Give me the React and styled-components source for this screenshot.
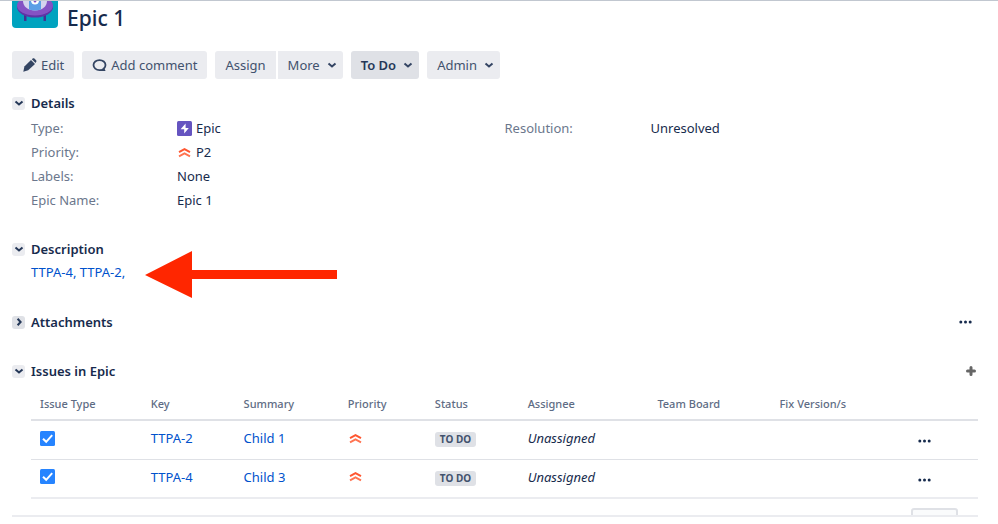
import React, { useState } from 'react';
import styled, { createGlobalStyle } from 'styled-components';

const GlobalStyle = createGlobalStyle`
  * {
    box-sizing: border-box;
  }

  body {
    margin: 0;
    background: #ffffff;
    color: #172b4d;
    font-family: 'Noto Sans', 'Open Sans', sans-serif;
    font-size: 13px;
    line-height: 20px;
  }
`;

const Page = styled.main`
  border-top: 1px solid #c1c7d0;
  padding: 0 20px 0 12px;
`;

const Header = styled.header`
  display: flex;
  gap: 9px;
  height: 34px;
  margin-bottom: 16px;
`;

const Avatar = styled.svg`
  display: block;
  width: 46px;
  height: 27px;
`;

const Title = styled.h1`
  margin: 0;
  font-size: 21px;
  font-weight: 500;
  line-height: 34px;
`;

const Toolbar = styled.div`
  display: flex;
  gap: 8px;
  margin-bottom: 12px;
`;

const ButtonGroup = styled.div`
  display: flex;
  gap: 2px;
`;

const ToolButton = styled.button`
  display: inline-flex;
  align-items: center;
  gap: ${(props) => (props.$menu ? '7px' : '4px')};
  height: 28px;
  padding: 0 ${(props) => (props.$menu ? '6px' : '10px')} 0 10px;
  border: none;
  border-radius: ${(props) => props.$radius || '3px'};
  background: ${(props) => (props.$status ? '#dfe1e6' : '#ebecf0')};
  color: ${(props) => (props.$status ? '#253858' : '#42526e')};
  font-family: inherit;
  font-size: 13px;
  font-weight: ${(props) => (props.$status ? 600 : 400)};
  white-space: nowrap;
  cursor: pointer;

  svg {
    flex: none;
    color: #344563;
  }
`;

const Module = styled.section`
  position: relative;
  margin-bottom: ${(props) => props.$space || '29px'};
`;

const ModuleHeader = styled.div`
  display: flex;
  align-items: center;
  justify-content: space-between;
  height: 24px;
`;

const ModuleTitle = styled.h2`
  display: flex;
  align-items: center;
  gap: 6px;
  margin: 0;
  font-size: 13px;
  font-weight: 600;
  line-height: 20px;
`;

const Toggle = styled.button`
  display: flex;
  align-items: center;
  justify-content: center;
  width: 13px;
  height: 13px;
  padding: 0;
  border: none;
  border-radius: 3px;
  background: ${(props) => (props.$open ? '#ebecf0' : '#dfe1e6')};
  color: #253858;
  cursor: pointer;
`;

const IconButton = styled.button`
  display: inline-flex;
  align-items: center;
  justify-content: center;
  padding: 0;
  border: none;
  background: transparent;
  color: ${(props) => props.$color || '#172b4d'};
  cursor: pointer;
`;

const HeaderAction = styled.div`
  display: flex;
  padding-right: ${(props) => props.$inset || '0'};
`;

const ModuleBody = styled.div`
  padding-left: 19px;
`;

const DetailsGrid = styled.div`
  display: grid;
  grid-template-columns: 1fr 1fr;
  align-items: start;
`;

const FieldList = styled.dl`
  display: grid;
  grid-template-columns: 146px 1fr;
  margin: 0;
  padding-top: 1px;
`;

const FieldLabel = styled.dt`
  color: #6b778c;
  line-height: 24px;
`;

const FieldValue = styled.dd`
  display: flex;
  align-items: center;
  gap: 4px;
  margin: 0;
  line-height: 24px;
`;

const IssueLink = styled.a`
  color: #0052cc;
  text-decoration: none;

  &:hover {
    text-decoration: underline;
  }
`;

const DescriptionText = styled.p`
  margin: 0;
  color: #0052cc;
  line-height: 22px;
`;

const Arrow = styled.svg`
  position: absolute;
  left: 133px;
  top: 14px;
  width: 192px;
  height: 48px;
  pointer-events: none;
`;

const IssuesTable = styled.table`
  width: 100%;
  table-layout: fixed;
  border-collapse: separate;
  border-spacing: 0;
  margin-top: 5px;
  text-align: left;
`;

const HeadCell = styled.th`
  width: ${(props) => props.$width};
  height: 33px;
  padding: 0 0 0 9px;
  border-bottom: 2px solid #dfe1e6;
  color: #5e6c84;
  font-size: 11px;
  font-weight: 500;
  line-height: 20px;
  white-space: nowrap;
`;

const Cell = styled.td`
  height: 39px;
  padding: 0 0 4px 9px;
  border-bottom: 1px solid #dfe1e6;
  white-space: nowrap;

  svg {
    display: block;
  }

  tr:last-child & {
    border-bottom: 2px solid #ebecf0;
  }
`;

const Lozenge = styled.span`
  display: inline-block;
  padding: 0 5px;
  border-radius: 3px;
  background: #dfe1e6;
  color: #42526e;
  font-size: 10px;
  font-weight: 700;
  line-height: 15px;
`;

const Assignee = styled.em`
  font-style: italic;
`;

// the comment bar is cut off by the bottom edge of the panel
const Footer = styled.footer`
  display: flex;
  justify-content: flex-end;
  height: 18px;
  padding: 9px 20px 0 0;
  margin-top: -29px;
  border-bottom: 2px solid #ebecf0;
  overflow: hidden;
`;

const FooterButton = styled.button`
  flex: none;
  width: 47px;
  height: 28px;
  border: 2px solid #dfe1e6;
  border-radius: 3px;
  background: #fafbfc;
`;

const ChevronDown = () => (
  <svg width="10" height="10" viewBox="0 0 10 10" fill="none" stroke="currentColor" strokeWidth="2">
    <path d="M1.5 3.4 5 6.4l3.5-3" />
  </svg>
);

const ChevronRight = () => (
  <svg width="10" height="10" viewBox="0 0 10 10" fill="none" stroke="currentColor" strokeWidth="2">
    <path d="M3.6 1.8 6.6 5l-3 3.2" />
  </svg>
);

const PencilIcon = () => (
  <svg width="15" height="14" viewBox="0 0 15 14" fill="currentColor">
    <path d="M9 2 13 6 6.200 12.300 1.300 13.700 2.400 8.600z" />
    <path d="M9.800 1.300 10.700.6c.5-.5 1.200-.5 1.700 0l1.700 1.700c.5.5.5 1.200 0 1.700l-.6.900z" />
  </svg>
);

const CommentIcon = () => (
  <svg width="15" height="14" viewBox="0 0 15 14" fill="none" stroke="currentColor" strokeWidth="1.8">
    <path d="M9.500 11.800C8.900 12 8.200 12.100 7.500 12.100 4.100 12.100 1.500 9.900 1.500 7.100S4.100 2.100 7.500 2.100s6 2.200 6 5c0 1.300-.6 2.500-1.500 3.400" />
    <path d="M9 11.400 12 9.400l1.600 3.600H9z" fill="currentColor" stroke="none" />
  </svg>
);

const EpicIcon = () => (
  <svg width="15" height="15" viewBox="0 0 15 15">
    <rect width="15" height="15" rx="1.500" fill="#6554c0" />
    <path d="M8.600 2.500 3.600 8.300h3.600v4.200l4.600-5.600H8.600z" fill="#ffffff" />
  </svg>
);

const PriorityIcon = ({ label }) => (
  <svg width="15" height="15" viewBox="0 0 15 15" fill="none" strokeWidth="1.900" role="img" aria-label={label}>
    <path d="M2 7.200 7.500 4.200 13 7.200" stroke="#ff5630" />
    <path d="M2 11.400 7.500 8.400 13 11.400" stroke="#ff7452" />
  </svg>
);

const TaskIcon = () => (
  <svg width="15" height="15" viewBox="0 0 15 15" role="img" aria-label="Task">
    <rect width="15" height="15" rx="1.500" fill="#2684ff" />
    <path d="M3 7.700 6.200 10.800 12.200 4.200" fill="none" stroke="#ffffff" strokeWidth="2" />
  </svg>
);

const DotsIcon = () => (
  <svg width="13" height="4" viewBox="0 0 13 4" fill="currentColor">
    <circle cx="1.800" cy="2" r="1.500" />
    <circle cx="6.500" cy="2" r="1.500" />
    <circle cx="11.200" cy="2" r="1.500" />
  </svg>
);

const PlusIcon = () => (
  <svg width="10" height="10" viewBox="0 0 10 10" stroke="currentColor" strokeWidth="3" strokeLinecap="round">
    <path d="M5 1.500v7M1.500 5h7" />
  </svg>
);

const ProjectAvatar = () => (
  <Avatar viewBox="0 0 46 27" role="img" aria-label="Project avatar">
    <path d="M0 0h46v23q0 4-4 4H4q-4 0-4-4z" fill="#00a3bf" />
    <path d="M12 13h2.500v7H12zM31.500 13H34v7h-2.500z" fill="#403294" />
    <ellipse cx="23" cy="6" rx="18" ry="10.500" fill="#5e35a5" />
    <ellipse cx="23" cy="4.500" rx="18" ry="10" fill="#8552c4" />
    <path d="M11 0h24c0 5.500-5 9.500-12 9.500S11 5.500 11 0z" fill="#d5d3ee" />
    <path d="M17 0h12v8.500q-6 1.800-12 0z" fill="#5c9fe6" />
    <path d="M19 0h8q-.5 3.500-4 3.500T19 0z" fill="#ffffff" />
    <path d="M21.500 0h3q-.3 1.500-1.500 1.500T21.500 0z" fill="#8552c4" />
  </Avatar>
);

const columns = [
  { name: 'Issue Type', width: '11.700%' },
  { name: 'Key', width: '9.800%' },
  { name: 'Summary', width: '11%' },
  { name: 'Priority', width: '9.200%' },
  { name: 'Status', width: '9.800%' },
  { name: 'Assignee', width: '13.700%' },
  { name: 'Team Board', width: '12.900%' },
  { name: 'Fix Version/s', width: '14.600%' },
  { name: '', width: 'auto' },
];

const issues = [
  { key: 'TTPA-2', summary: 'Child 1' },
  { key: 'TTPA-4', summary: 'Child 3' },
];

const Section = ({ title, defaultOpen = true, space, action, children }) => {
  const [open, setOpen] = useState(defaultOpen);

  return (
    <Module $space={space}>
      <ModuleHeader>
        <ModuleTitle>
          <Toggle
            type="button"
            $open={open}
            aria-label={`Toggle ${title}`}
            aria-expanded={open}
            onClick={() => setOpen(!open)}
          >
            {open ? <ChevronDown /> : <ChevronRight />}
          </Toggle>
          {title}
        </ModuleTitle>
        {action}
      </ModuleHeader>
      {open && children}
    </Module>
  );
};

const App = () => {
  return (
    <>
      <GlobalStyle />
      <Page>
        <Header>
          <ProjectAvatar />
          <Title>Epic 1</Title>
        </Header>

        <Toolbar>
          <ToolButton type="button">
            <PencilIcon />
            Edit
          </ToolButton>
          <ToolButton type="button">
            <CommentIcon />
            Add comment
          </ToolButton>
          <ButtonGroup>
            <ToolButton type="button" $radius="3px 0 0 3px">Assign</ToolButton>
            <ToolButton type="button" $menu $radius="0 3px 3px 0">
              More
              <ChevronDown />
            </ToolButton>
          </ButtonGroup>
          <ToolButton type="button" $menu $status>
            To Do
            <ChevronDown />
          </ToolButton>
          <ToolButton type="button" $menu>
            Admin
            <ChevronDown />
          </ToolButton>
        </Toolbar>

        <Section title="Details" space="25px">
          <ModuleBody>
            <DetailsGrid>
              <FieldList>
                <FieldLabel>Type:</FieldLabel>
                <FieldValue><EpicIcon />Epic</FieldValue>
                <FieldLabel>Priority:</FieldLabel>
                <FieldValue><PriorityIcon label="P2" />P2</FieldValue>
                <FieldLabel>Labels:</FieldLabel>
                <FieldValue>None</FieldValue>
                <FieldLabel>Epic Name:</FieldLabel>
                <FieldValue>Epic 1</FieldValue>
              </FieldList>
              <FieldList>
                <FieldLabel>Resolution:</FieldLabel>
                <FieldValue>Unresolved</FieldValue>
              </FieldList>
            </DetailsGrid>
          </ModuleBody>
        </Section>

        <Section title="Description" space="27px">
          <ModuleBody>
            <DescriptionText>
              <IssueLink href="#TTPA-4">TTPA-4</IssueLink>, <IssueLink href="#TTPA-2">TTPA-2</IssueLink>,
            </DescriptionText>
          </ModuleBody>
          <Arrow viewBox="0 0 192 48" aria-hidden="true">
            <path d="M0 24 47 0v19h145v9H47v19z" fill="#ff2600" />
          </Arrow>
        </Section>

        <Section
          title="Attachments"
          defaultOpen={false}
          space="25px"
          action={
            <HeaderAction $inset="6px">
              <IconButton type="button" aria-label="Attachment options"><DotsIcon /></IconButton>
            </HeaderAction>
          }
        />

        <Section
          title="Issues in Epic"
          action={
            <HeaderAction $inset="2px">
              <IconButton type="button" $color="#666666" aria-label="Create issue in epic"><PlusIcon /></IconButton>
            </HeaderAction>
          }
        >
          <ModuleBody>
            <IssuesTable>
              <thead>
                <tr>
                  {columns.map((column, index) => (
                    <HeadCell key={index} $width={column.width} scope="col">{column.name}</HeadCell>
                  ))}
                </tr>
              </thead>
              <tbody>
                {issues.map((issue) => (
                  <tr key={issue.key}>
                    <Cell><TaskIcon /></Cell>
                    <Cell><IssueLink href={`#${issue.key}`}>{issue.key}</IssueLink></Cell>
                    <Cell><IssueLink href={`#${issue.key}`}>{issue.summary}</IssueLink></Cell>
                    <Cell><PriorityIcon label="P2" /></Cell>
                    <Cell><Lozenge>TO DO</Lozenge></Cell>
                    <Cell><Assignee>Unassigned</Assignee></Cell>
                    <Cell />
                    <Cell />
                    <Cell>
                      <IconButton type="button" aria-label={`Actions for ${issue.key}`}><DotsIcon /></IconButton>
                    </Cell>
                  </tr>
                ))}
              </tbody>
            </IssuesTable>
          </ModuleBody>
        </Section>

        <Footer>
          <FooterButton type="button" aria-label="Comment" />
        </Footer>
      </Page>
    </>
  );
};

export default App;
